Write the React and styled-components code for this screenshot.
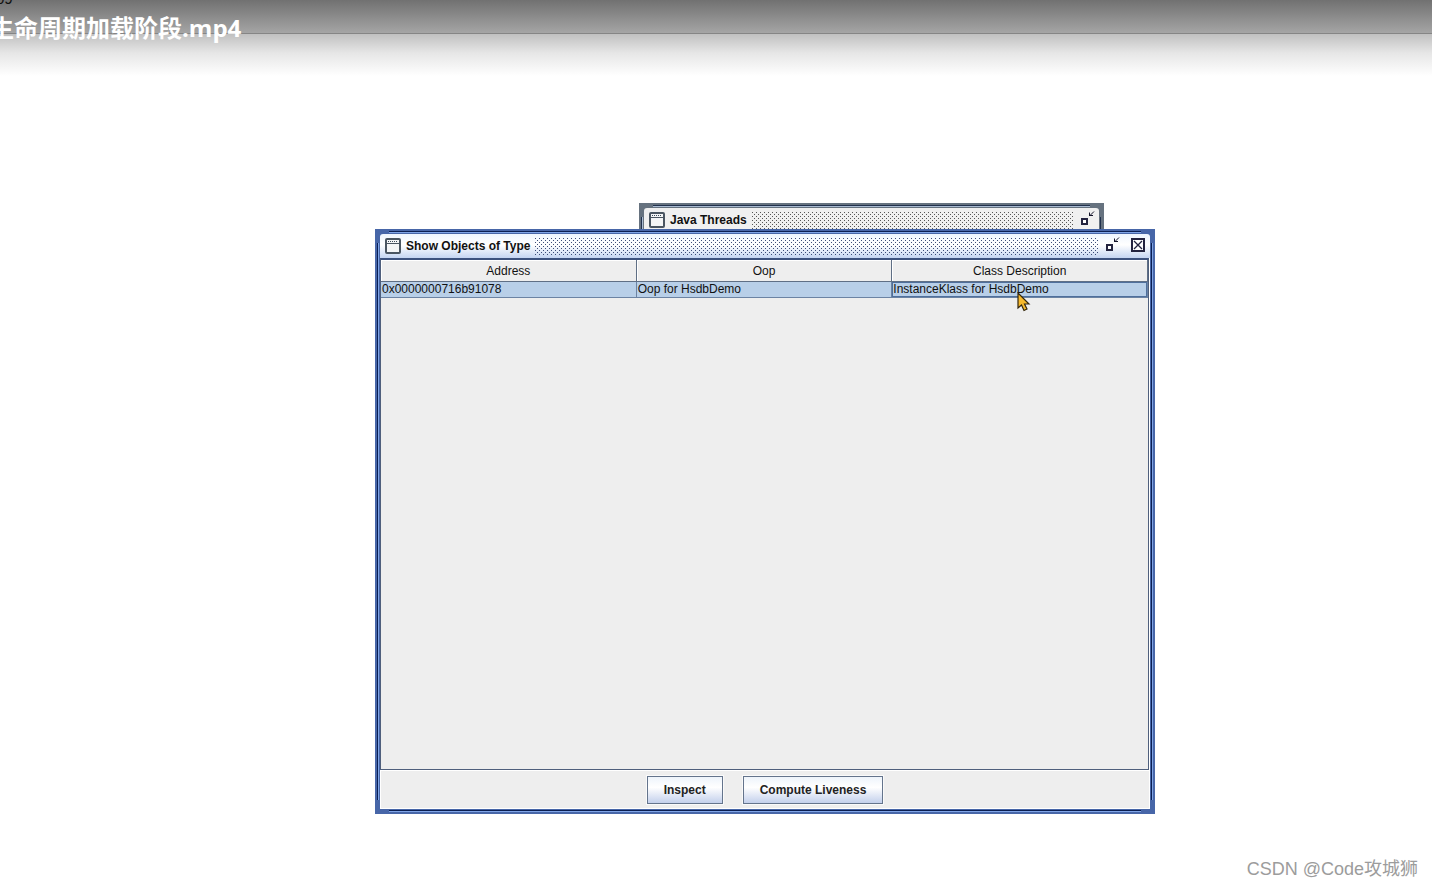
import React from 'react';
import styled, { createGlobalStyle } from 'styled-components';

const GlobalStyle = createGlobalStyle`
	* {
		box-sizing: border-box;
	}
	body {
		margin: 0;
		background: #fff;
		font-family: "Liberation Sans", Arial, sans-serif;
		font-size: 12px;
		color: #111;
	}
`;

const FrameIcon = () => (
	<svg width="16" height="16" viewBox="0 0 16 16">
		<rect x="1" y="1" width="14" height="14" rx="1" fill="#f4f5f6" stroke="#4a5561" strokeWidth="2" />
		<path d="M3 3.500H13" stroke="#3c4a58" strokeDasharray="1 1" />
		<path d="M2 5.500H14" stroke="#4a5561" />
	</svg>
);

const RestoreIcon = () => (
	<svg width="16" height="16" viewBox="0 0 16 16">
		<rect x="3" y="8" width="5" height="5" fill="#fff" stroke="#23233f" strokeWidth="2" />
		<path d="M15 0.500L11 4.500M10.500 1.500V5M10 4.500H14" fill="none" stroke="#15152a" />
	</svg>
);

const CloseIcon = () => (
	<svg width="16" height="16" viewBox="0 0 16 16">
		<rect x="2" y="2" width="12" height="12" fill="#fff" stroke="#23233f" strokeWidth="2" />
		<path d="M4 4L12 12M12 4L4 12" stroke="#23233f" strokeWidth="1.300" />
	</svg>
);

const App = () => {
	return (
		<Desktop>
			<GlobalStyle />
			<PlayerBar>
				<Clock>09</Clock>
				<FileName>生命周期加载阶段.mp4</FileName>
			</PlayerBar>

			<ThreadsWindow>
				<TitleBar>
					<FrameIcon />
					<Title>Java Threads</Title>
					<Bumps />
					<IconButton aria-label="Restore"><RestoreIcon /></IconButton>
				</TitleBar>
			</ThreadsWindow>

			<ObjectsWindow>
				<TitleBar $active>
					<FrameIcon />
					<Title>Show Objects of Type</Title>
					<Bumps $active />
					<IconButton aria-label="Restore"><RestoreIcon /></IconButton>
					<IconButton aria-label="Close"><CloseIcon /></IconButton>
				</TitleBar>
				<TablePane>
					<Table>
						<thead>
							<tr>
								<HeadCell>Address</HeadCell>
								<HeadCell>Oop</HeadCell>
								<HeadCell>Class Description</HeadCell>
							</tr>
						</thead>
						<tbody>
							<tr>
								<Cell>0x0000000716b91078</Cell>
								<Cell>Oop for HsdbDemo</Cell>
								<Cell $focused>InstanceKlass for HsdbDemo</Cell>
							</tr>
						</tbody>
					</Table>
				</TablePane>
				<Footer>
					<Button>Inspect</Button>
					<Button>Compute Liveness</Button>
				</Footer>
			</ObjectsWindow>

			<Pointer width="14" height="20" viewBox="0 0 14 20">
				<path d="M1 1V16L4.500 13L7 18.500L10 17L7.500 12H12Z" fill="#f7b92c" stroke="#33260c" strokeWidth="1.200" />
			</Pointer>
			<Watermark>CSDN @Code攻城狮</Watermark>
		</Desktop>
	)
}

const Desktop = styled.main`
	position: relative;
	min-height: 100vh;
	overflow: hidden;
`;

const PlayerBar = styled.header`
	position: relative;
	height: 76px;
	overflow: hidden;
	background:
		linear-gradient(#717171, #a5a5a5) 0 0 / 100% 33px no-repeat,
		linear-gradient(#858585, #858585) 0 33px / 100% 1px no-repeat,
		linear-gradient(#c0c0c0, #e6e6e6 45%, #fff) 0 34px / 100% 42px no-repeat;
`;

const Clock = styled.div`
	position: absolute;
	left: -4px;
	top: -10px;
	font-size: 15px;
	line-height: 18px;
`;

const FileName = styled.div`
	position: absolute;
	left: -10px;
	top: 12px;
	font: bold 24px/32px "Open Sans", "Noto Sans CJK SC", sans-serif;
	white-space: nowrap;
	color: #fff;
`;

const Window = styled.section`
	position: absolute;
	display: flex;
	flex-direction: column;
	padding: 5px;
`;

const ThreadsWindow = styled(Window)`
	left: 639px;
	top: 203px;
	width: 465px;
	height: 60px;
	background:
		linear-gradient(#22314c, #22314c) 14px 2px / calc(100% - 28px) 1px no-repeat,
		linear-gradient(#a9bbd2, #a9bbd2) 14px 3px / calc(100% - 28px) 1px no-repeat,
		linear-gradient(#22314c, #22314c) 2px 14px / 1px 100% no-repeat,
		linear-gradient(#a9bbd2, #a9bbd2) 3px 14px / 1px 100% no-repeat,
		linear-gradient(#22314c, #22314c) calc(100% - 3px) 14px / 1px 100% no-repeat,
		#66727f;
`;

const ObjectsWindow = styled(Window)`
	left: 375px;
	top: 229px;
	width: 780px;
	height: 585px;
	background:
		linear-gradient(#0b1f52, #0b1f52) 14px 2px / calc(100% - 28px) 1px no-repeat,
		linear-gradient(#7fa4e6, #7fa4e6) 14px 3px / calc(100% - 28px) 1px no-repeat,
		linear-gradient(#0b1f52, #0b1f52) 14px calc(100% - 3px) / calc(100% - 28px) 1px no-repeat,
		linear-gradient(#7fa4e6, #7fa4e6) 14px calc(100% - 2px) / calc(100% - 28px) 1px no-repeat,
		linear-gradient(#0b1f52, #0b1f52) 2px 14px / 1px calc(100% - 28px) no-repeat,
		linear-gradient(#7fa4e6, #7fa4e6) 3px 14px / 1px calc(100% - 28px) no-repeat,
		linear-gradient(#0b1f52, #0b1f52) calc(100% - 3px) 14px / 1px calc(100% - 28px) no-repeat,
		linear-gradient(#7fa4e6, #7fa4e6) calc(100% - 2px) 14px / 1px calc(100% - 28px) no-repeat,
		#4766a8;
`;

const TitleBar = styled.div`
	display: flex;
	align-items: center;
	flex: none;
	height: 24px;
	padding: 0 4px 0 5px;
	border-radius: 3px 3px 0 0;
	background: ${({ $active }) => $active
		? 'linear-gradient(#eef5fe, #fff 45%, #c5d5f2)'
		: '#f0f0f0'};
`;

const Title = styled.h2`
	margin: 0 5px;
	font-size: 12px;
	line-height: 16px;
`;

const Bumps = styled.div`
	flex: 1;
	height: 17px;
	--dot: conic-gradient(at 1px 1px, transparent 75%, ${({ $active }) => $active ? '#3c4c78' : '#555'} 0);
	background: var(--dot) 0 0 / 4px 4px, var(--dot) 2px 2px / 4px 4px;
`;

const IconButton = styled.button`
	display: flex;
	margin: 0 0 3px 5px;
	padding: 0;
	border: 0;
	background: none;

	& + & {
		margin-left: 10px;
	}
`;

const TablePane = styled.div`
	flex: 1;
	border: 1px solid #4f5f7c;
	border-top: 2px solid #3d527e;
	margin-right: 1px;
	background: #eee;
	box-shadow: 1px 0 #fff;
`;

const Table = styled.table`
	width: 100%;
	table-layout: fixed;
	border-collapse: separate;
	border-spacing: 0;
`;

const HeadCell = styled.th`
	height: 22px;
	padding: 0;
	border-right: 1px solid #5f6f85;
	border-bottom: 1px solid #5f6f85;
	box-shadow: inset 1px 1px #fff;
	font-weight: normal;
	line-height: 16px;
`;

const Cell = styled.td`
	height: 16px;
	padding: 0 1px;
	border-right: 1px solid #6b83a3;
	border-bottom: 1px solid #6b83a3;
	background: #b8cfe8;
	line-height: 15px;
	white-space: nowrap;
	box-shadow: ${({ $focused }) => $focused ? 'inset 0 0 0 1px #4f6f9c' : 'none'};
`;

const Footer = styled.div`
	display: flex;
	justify-content: center;
	align-items: center;
	gap: 20px;
	flex: none;
	height: 39px;
	border: 1px solid #fff;
	background: #eee;
`;

const Button = styled.button`
	height: 28px;
	padding: 0 16px;
	border: 1px solid #64748c;
	background: linear-gradient(#eef4fb, #fff 40%, #c3d0ec);
	box-shadow: 0 0 0 1px #fafafa;
	font: bold 12px/16px "Liberation Sans", Arial, sans-serif;
	color: #222;
`;

const Pointer = styled.svg`
	position: absolute;
	left: 1017px;
	top: 292px;
`;

const Watermark = styled.div`
	position: absolute;
	right: 14px;
	bottom: 5px;
	font: 18px/26px "Liberation Sans", "Noto Sans CJK SC", sans-serif;
	color: #9c9c9c;
`;

export default App;
